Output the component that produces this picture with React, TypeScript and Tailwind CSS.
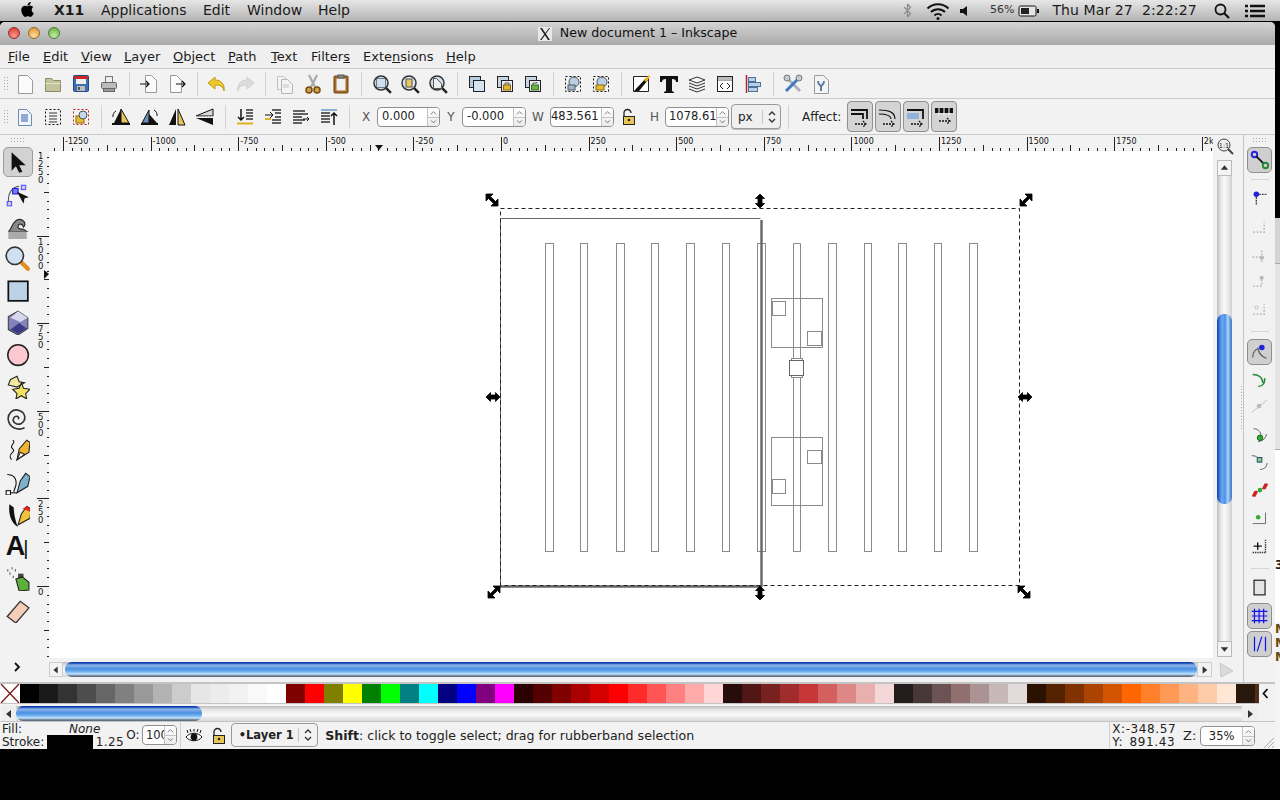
import type { ReactNode } from "react";
import { FaApple } from "react-icons/fa";
import { LuBluetooth } from "react-icons/lu";

const font = "font-['DejaVu_Sans',sans-serif]";

const aquaH = "bg-[linear-gradient(#0a3fb0_0px,#0a3fb0_1px,#8fb5e8_3px,#4a8fe2_7px,#7ab8f2_10px,#c6e8ff_12px,#5f6f86_14px)]";
const aquaV = "bg-[linear-gradient(90deg,#0b3fae_0px,#2e6fd8_2px,#6fa8ee_5px,#4f90e6_8px,#a8d8ff_11px,#4f7fc4_14px)]";
const trackH = "bg-[linear-gradient(#bdbdbd,#e8e8e8_4px,#fafafa_9px,#d8d8d8)]";
const trackV = "bg-[linear-gradient(90deg,#bdbdbd,#e8e8e8_4px,#fafafa_8px,#e4e4e4_12px,#cfcfcf)]";

const palette = [
  "#000000", "#1a1a1a", "#333333", "#4d4d4d", "#666666", "#808080", "#999999", "#b3b3b3", "#cccccc", "#e6e6e6", "#ececec", "#f2f2f2", "#f9f9f9", "#ffffff",
  "#800000", "#ff0000", "#808000", "#ffff00", "#008000", "#00ff00", "#008080", "#00ffff", "#000080", "#0000ff", "#800080", "#ff00ff",
  "#2b0000", "#550000", "#800000", "#aa0000", "#d40000", "#ff0000", "#ff2a2a", "#ff5555", "#ff8080", "#ffaaaa", "#ffd5d5",
  "#280b0b", "#501616", "#782121", "#a02c2c", "#c83737", "#d35f5f", "#de8787", "#e9afaf", "#f4d7d7",
  "#241c1c", "#483737", "#6c5353", "#916f6f", "#ac9393", "#c8b7b7", "#e3dbdb",
  "#2b1100", "#552200", "#803300", "#aa4400", "#d45500", "#ff6600", "#ff7f2a", "#ff9955", "#ffb380", "#ffccaa", "#ffe6d5",
  "#28170b", "#502d16",
];

function Ic({ children, s = 24 }: { children: ReactNode; s?: number }) {
  return (
    <svg width={s} height={s} viewBox="0 0 24 24" className="shrink-0">
      {children}
    </svg>
  );
}

const Page = ({ x = 5, y = 3, w = 14, h = 18, f = "#fbfbfb", st = "#9a9a9a" }) => (
  <path d={`M${x + 0.5} ${y + 0.5}h${w - 5}l5 5v${h - 5}h-${w}z`} fill={f} stroke={st} />
);

const Mag = ({ cx = 12, cy = 11, r = 7, f = "#cfdff0" }) => (
  <g>
    <path d={`M${cx + r * 0.7} ${cy + r * 0.7}l5 5`} stroke="#222" strokeWidth="2.5" />
    <circle cx={cx} cy={cy} r={r} fill={f} stroke="#333" strokeWidth="1.5" />
  </g>
);

const Dots = ({ c = "#111" }) => <rect x="4.5" y="4.5" width="15" height="15" fill="none" stroke={c} strokeDasharray="2 2" />;

const tb1: (ReactNode | null)[] = [
  <Ic><Page /></Ic>,
  <Ic><path d="M4.5 6.5h6l2 2h7v11h-15z" fill="#c3c39c" stroke="#8c8c6c" /><path d="M4.5 11.5h15" stroke="#e5e5cf" /></Ic>,
  <Ic><rect x="4.5" y="3.5" width="15" height="16" rx="1" fill="#3d6fb0" stroke="#1f4a86" /><rect x="5" y="4" width="14" height="3" fill="#cc2727" /><rect x="7" y="7" width="10" height="5" fill="#eee" /><rect x="8" y="14" width="8" height="5" fill="#bbb" /><rect x="9" y="15" width="2" height="3" fill="#555" /></Ic>,
  <Ic><rect x="8.5" y="4.5" width="7" height="6" fill="#eee" stroke="#777" /><rect x="4.5" y="10.5" width="15" height="6" rx="1" fill="#bcbcbc" stroke="#666" /><rect x="6.5" y="16.5" width="11" height="3" fill="#999" stroke="#666" /></Ic>,
  null,
  <Ic><Page x={8} y={3} w={11} h={17} /><path d="M3 12h9m-3-3l3 3-3 3" fill="none" stroke="#111" strokeWidth="1.2" /></Ic>,
  <Ic><Page x={5} y={3} w={11} h={17} /><path d="M11 12h9m-3-3l3 3-3 3" fill="none" stroke="#111" strokeWidth="1.2" /></Ic>,
  null,
  <Ic><path d="M10 5L3 11l7 6v-4c5 0 8 1 9 6 1-7-3-11-9-11z" fill="#edc92f" stroke="#c09a10" /></Ic>,
  <Ic><path d="M14 5l7 6-7 6v-4c-5 0-8 1-9 6-1-7 3-11 9-11z" fill="#dcdcdc" stroke="#cfcfcf" /></Ic>,
  null,
  <Ic><Page x={4} y={4} w={11} h={13} f="#f4f4f4" st="#c2c2c2" /><Page x={8} y={7} w={11} h={14} f="#f4f4f4" st="#b5b5b5" /><path d="M10 13h6m-6 2h6" stroke="#c5c5c5" /></Ic>,
  <Ic><path d="M8 3l6 12M16 3l-6 12" stroke="#aaa" strokeWidth="2.2" /><circle cx="8" cy="18" r="3" fill="#c9a24a" stroke="#7a4a12" strokeWidth="1.5" /><circle cx="16" cy="18" r="3" fill="#c9a24a" stroke="#7a4a12" strokeWidth="1.5" /></Ic>,
  <Ic><rect x="5" y="4" width="14" height="17" rx="1" fill="#a66a28" stroke="#6d4212" /><rect x="7.5" y="6.5" width="9" height="12" fill="#f1f1f1" /><rect x="9" y="3" width="6" height="3" fill="#888" stroke="#555" /></Ic>,
  null,
  <Ic><Mag /><rect x="7.5" y="6.5" width="9" height="9" fill="none" stroke="#111" strokeDasharray="1 1" /></Ic>,
  <Ic><Mag f="#d8e4ef" /><rect x="9" y="7" width="6" height="8" fill="#e9c85e" stroke="#555" /></Ic>,
  <Ic><Mag /><Page x={8} y={6} w={8} h={10} f="#eee" st="#555" /></Ic>,
  null,
  <Ic><rect x="4.5" y="4.5" width="11" height="11" fill="#b7cde4" stroke="#222" /><rect x="8.5" y="8.5" width="11" height="11" fill="#d5e3f0" stroke="#222" /></Ic>,
  <Ic><rect x="4.5" y="4.5" width="11" height="11" fill="#c8d6e4" stroke="#222" /><rect x="8.5" y="8.5" width="11" height="11" fill="#e9eef3" stroke="#222" /><rect x="10.5" y="13" width="7" height="5" fill="#e6b62e" stroke="#8a6a10" /><path d="M12 13v-2h4v2" fill="none" stroke="#555" /></Ic>,
  <Ic><rect x="4.5" y="4.5" width="11" height="11" fill="#c8d6e4" stroke="#222" /><rect x="8.5" y="8.5" width="11" height="11" fill="#e9eef3" stroke="#222" /><rect x="10.5" y="13" width="7" height="5" fill="#6cb04a" stroke="#3a701f" /><path d="M12 13v-2h4v-1" fill="none" stroke="#555" /></Ic>,
  null,
  <Ic><Dots /><circle cx="13" cy="10" r="5" fill="#b9cfe6" stroke="#555" /><rect x="7" y="13" width="7" height="5" fill="#9fb6cf" stroke="#555" /></Ic>,
  <Ic><Dots /><circle cx="13" cy="10" r="5" fill="#b9cfe6" stroke="#555" /><rect x="7" y="13" width="8" height="5" fill="#e9bb30" stroke="#8a6a10" /></Ic>,
  null,
  <Ic><path d="M4.5 4.5h15v15h-15z" fill="#fff" stroke="#222" /><path d="M5 19L5 5h10z" fill="#fff" /><path d="M5 19l12-13 2 2-9 11z" fill="#111" /><path d="M15 8l5-5 1 2-4 5z" fill="#f3b81f" /></Ic>,
  <Ic><path d="M3 4h18v6h-2c0-2-1-3-4-3v12l2 1v1H7v-1l2-1V7C6 7 5 8 5 10H3z" fill="#111" /></Ic>,
  <Ic><path d="M4 8l8-3 8 3-8 3z" fill="#f5f5f5" stroke="#333" /><path d="M4 11l8 3 8-3M4 14l8 3 8-3M4 17l8 3 8-3" fill="none" stroke="#333" /></Ic>,
  <Ic><rect x="4.5" y="4.5" width="15" height="15" fill="#fff" stroke="#222" /><path d="M5 8h14" stroke="#555" /><path d="M5 5h14v3H5z" fill="#bbb" /><path d="M10 11l-3 3 3 3m4-6l3 3-3 3" fill="none" stroke="#222" /></Ic>,
  <Ic><path d="M5.5 3v18" stroke="#b4232c" strokeWidth="1.5" /><rect x="7.5" y="5.5" width="7" height="4" fill="#b9d0ea" stroke="#4d6f99" /><rect x="7.5" y="10.5" width="12" height="4" fill="#b9d0ea" stroke="#4d6f99" /><rect x="7.5" y="15.5" width="9" height="4" fill="#b9d0ea" stroke="#4d6f99" /></Ic>,
  null,
  <Ic><path d="M5 5l14 14" stroke="#aab3bb" strokeWidth="3" /><path d="M19 5L5 19" stroke="#3f78c4" strokeWidth="3" /><circle cx="18" cy="6" r="3" fill="#c5cbd0" stroke="#777" /><circle cx="6" cy="6" r="3" fill="#c5cbd0" stroke="#777" /></Ic>,
  <Ic><Page x={5} y={3} w={14} h={18} f="#f4f4f4" st="#999" /><path d="M9 9c0 4 2 4 3 5v5m3-10c0 4-2 4-3 5" fill="none" stroke="#5c7e9c" strokeWidth="2" /></Ic>,
];

const tb2: (ReactNode | null)[] = [
  <Ic><Page x={5} y={4} w={13} h={16} f="#f2f6fb" st="#6a8cb8" /><path d="M8 10h7m-7 2h7m-7 2h7m-7 2h7" stroke="#2f5ea8" /></Ic>,
  <Ic><Dots /><path d="M8 8h8M8 11h8M8 14h8M8 17h8" stroke="#777" strokeWidth="1.5" /></Ic>,
  <Ic><Dots c="#c81e1e" /><rect x="7" y="11" width="8" height="7" fill="#e9bb30" stroke="#8a6a10" /><circle cx="14" cy="10" r="4" fill="#c5d8ec" stroke="#555" /></Ic>,
  null,
  <Ic><path d="M12 4v14H20z" fill="#e9c65c" stroke="#111" /><path d="M12 4L5 18h7z" fill="#111" /><path d="M3 19h18" stroke="#111" strokeWidth="2" /><path d="M7 6a6 6 0 0 0-3 6" fill="none" stroke="#111" /></Ic>,
  <Ic><path d="M5 18l7-13v13z" fill="#6b8fb8" stroke="#111" /><path d="M12 18h8l-8-9z" fill="#111" /><path d="M4 19h17" stroke="#111" strokeWidth="2" /><path d="M17 5a6 6 0 0 1 3 6" fill="none" stroke="#111" /></Ic>,
  <Ic><path d="M11 4v16H4z" fill="#111" /><path d="M13 4v16h7z" fill="#e9c65c" stroke="#111" /></Ic>,
  <Ic><path d="M3 11L20 4v7z" fill="#d8d8d8" stroke="#111" /><path d="M3 13l17 7v-7z" fill="#111" /><path d="M3 12h18" stroke="#fff" strokeDasharray="2 1" /></Ic>,
  null,
  <Ic><path d="M8 4v11m-3-3l3 3 3-3" fill="none" stroke="#111" strokeWidth="1.5" /><path d="M13 5h7m-7 3h7m-7 3h7m-7 3h7" stroke="#333" strokeWidth="1.4" /><path d="M4 18.5h16" stroke="#e0b020" strokeWidth="2" /></Ic>,
  <Ic><path d="M4 10h8m-3-3l3 3-3 3" fill="none" stroke="#111" /><path d="M11 5h9m-6 3h6m-6 4h6m-9 3h9m-9 3h9" stroke="#333" strokeWidth="1.4" /><path d="M4 14h6" stroke="#e0b020" strokeWidth="2" /></Ic>,
  <Ic><path d="M4 6h12M4 9h15M4 12h9M4 15h12M4 18h9" stroke="#333" strokeWidth="1.4" /><path d="M14 14h6m-2-2l2 2-2 2" fill="none" stroke="#111" /></Ic>,
  <Ic><path d="M4 5h16" stroke="#8fb0d4" strokeWidth="2" /><path d="M4 8h9M4 11h9M4 14h9M4 17h9" stroke="#333" strokeWidth="1.4" /><path d="M17 20V8m-3 3l3-3 3 3" fill="none" stroke="#111" strokeWidth="1.5" /></Ic>,
];

const affect = [
  <Ic><path d="M3 5h16v9M3 9h12v5" fill="none" stroke="#111" strokeWidth="1.8" /><path d="M7 19h11m-3-3l3 3-3 3" fill="none" stroke="#111" strokeWidth="1.3" strokeDasharray="2 1" /></Ic>,
  <Ic><path d="M3 5c9 0 16 2 16 9M3 9c6 0 12 1 12 5" fill="none" stroke="#111" strokeWidth="1.2" /><path d="M7 19h11m-3-3l3 3-3 3" fill="none" stroke="#111" strokeWidth="1.3" strokeDasharray="2 1" /></Ic>,
  <Ic><path d="M3 5h16v9" fill="none" stroke="#111" strokeWidth="1.8" /><rect x="3" y="8" width="12" height="6" fill="#8fb4dc" /><path d="M7 19h11m-3-3l3 3-3 3" fill="none" stroke="#111" strokeWidth="1.3" strokeDasharray="2 1" /></Ic>,
  <Ic><path d="M3 3h18v5H3z" fill="#111" /><path d="M7 3v7m5-7v7m5-7v7" stroke="#fff" /><path d="M7 16h11m-3-3l3 3-3 3" fill="none" stroke="#111" strokeWidth="1.3" strokeDasharray="2 1" /></Ic>,
];

const tools: [ReactNode, string][] = [
  [<Ic s={26}><path d="M7 3v17l4-4 3 6 3-1-3-6h6z" fill="#111" /></Ic>, "h-[30px] mb-[2px]"],
  [<Ic s={26}><path d="M4 18C4 10 7 5 14 4" fill="none" stroke="#555" /><rect x="8" y="6" width="5" height="5" fill="#7a7cf8" stroke="#1b1bd8" /><rect x="3" y="18" width="4" height="4" fill="#ccd" stroke="#55f" /><rect x="16" y="3" width="4" height="4" fill="#ccd" stroke="#55f" /><path d="M12 9l11 5-4 1-1 5z" fill="#111" /></Ic>, "h-[31px]"],
  [<Ic s={26}><path d="M4 17c3-1 3-9 9-11 5-1 8 4 5 7-1-3-4-4-5-1-1 2 2 3 5 3l3 2z" fill="#888" stroke="#222" /><path d="M4 17h17v7H4z" fill="#aaa" /></Ic>, "h-[31px]"],
  [<Ic s={26}><path d="M15 15l7 7" stroke="#e09020" strokeWidth="4" strokeLinecap="round" /><circle cx="10" cy="10" r="8" fill="#cfe0f0" stroke="#333" strokeWidth="1.5" /></Ic>, "h-[33px]"],
  [<Ic s={26}><rect x="4" y="4" width="18" height="18" fill="#bcd2e6" stroke="#111" strokeWidth="1.6" /></Ic>, "h-[32px]"],
  [<Ic s={26}><path d="M13 2l9 6v10l-9 6-9-5V7z" fill="#8582bb" stroke="#444" /><path d="M13 2l9 6-7 4-9-4z" fill="#d8d8ec" /><path d="M6 19l8-6 7 5-8 5z" fill="#3a3a88" /></Ic>, "h-[32px]"],
  [<Ic s={26}><circle cx="13" cy="13" r="9.5" fill="#fdc8d2" stroke="#222" strokeWidth="1.4" /></Ic>, "h-[32px]"],
  [<Ic s={26}><path d="M6 6l6-3 2 5 5 1-7 4-8-2z" fill="#f2eaa0" stroke="#222" /><path d="M16 9l2 5 6 1-4 4 1 5-5-3-5 3 1-5-4-4 6-1z" fill="#f3e165" stroke="#222" /></Ic>, "h-[32px]"],
  [<Ic s={26}><path d="M13 13c2-2-2-4-4-1-2 4 3 7 7 5 5-3 4-10-2-12C8 3 3 8 4 14c1 7 9 10 15 7" fill="none" stroke="#333" strokeWidth="1.5" /></Ic>, "h-[31px]"],
  [<Ic s={26}><path d="M8 3c4 2-4 5 0 8s-6 4-1 10" fill="none" stroke="#111" /><path d="M12 21l2-10 7-8 3 2-1 9z" fill="#efb530" stroke="#222" /><path d="M12 21l3-7 4 2z" fill="#fff" stroke="#222" /></Ic>, "h-[33px]"],
  [<Ic s={26}><path d="M3 5c6 0 9 4 8 10l-2 6" fill="none" stroke="#111" /><rect x="2" y="20" width="4" height="4" fill="#fff" stroke="#111" /><path d="M6 22h6" stroke="#111" /><path d="M12 22l3-11 5-7 4 3-2 9z" fill="#7fb1cd" stroke="#222" /></Ic>, "h-[32px]"],
  [<Ic s={26}><path d="M5 3c-1 8 1 17 8 21-2-4-4-12-4-18z" fill="#111" /><path d="M13 22l3-10 5-7 4 2-1 9z" fill="#f1c23c" stroke="#222" /><path d="M17 7l4-2 4 2-1 3z" fill="#d22" /></Ic>, "h-[32px]"],
  [<span className="text-[27px] font-bold leading-none text-[#111] font-['Liberation_Sans',sans-serif]">A<span className="font-normal text-[20px] -ml-[2px]">|</span></span>, "h-[32px]"],
  [<Ic s={26}><path d="M3 5h1m3-2h1M5 8h1m4-3h1M8 11h1" stroke="#555" strokeWidth="2" /><rect x="13" y="8" width="5" height="4" fill="#444" /><path d="M11 13l6-2 6 5v7l-9 1z" fill="#5cb03a" stroke="#222" /></Ic>, "h-[32px]"],
  [<Ic s={26}><path d="M3 18L15 4l8 6-12 14z" fill="#f6cdb8" stroke="#333" strokeWidth="1.2" /></Ic>, "h-[32px]"],
];

const Snap = ({ d, d2, c = "#bbb" }: { d: string; d2?: ReactNode; c?: string }) => (
  <Ic s={20}>
    <path d={d} fill="none" stroke={c} strokeWidth="2" strokeDasharray="2 2" />
    {d2}
  </Ic>
);

const rule = <div className="w-[18px] h-px bg-[#d5d5d5]" />;

const snaps: [ReactNode, string, boolean?][] = [
  [<Ic s={22}><circle cx="6" cy="6" r="3" fill="none" stroke="#22d" strokeWidth="2" /><path d="M8 8l8 8" stroke="#111" strokeWidth="2" /><circle cx="18" cy="18" r="3" fill="none" stroke="#283" strokeWidth="2" /></Ic>, "h-[26px] mb-[6px]", true],
  [rule, "h-px mb-[6px]"],
  [<Ic s={22}><path d="M8 8h11M8 8v11" stroke="#444" strokeWidth="1.5" strokeDasharray="2 1" /><circle cx="8" cy="8" r="3" fill="#22d" /></Ic>, "h-[24px] mb-[6px]"],
  [<Snap d="M4 17h13V5" />, "h-[24px] mb-[6px]"],
  [<Snap d="M3 11h14M14 3v14" d2={<circle cx="14" cy="12" r="2.5" fill="#bbb" />} />, "h-[24px]"],
  [<Snap d="M4 17h10V5" d2={<circle cx="14" cy="7" r="2.5" fill="#bbb" />} />, "h-[24px] mb-[4px]"],
  [<Snap d="M4 17h13V5" d2={<circle cx="8" cy="9" r="2" fill="none" stroke="#bbb" />} />, "h-[24px] mb-[9px]"],
  [rule, "h-px mb-[7px]"],
  [<Ic s={22}><path d="M4 18c0-6 4-10 10-11M10 9c1 5 4 8 9 10" fill="none" stroke="#666" strokeWidth="1.5" /><circle cx="14" cy="7" r="3" fill="#22d" /></Ic>, "h-[26px]", true],
  [<Ic s={22}><path d="M4 6c6 0 11 3 11 9M17 10c1 6-3 9-7 9" fill="none" stroke="#283" strokeWidth="1.5" /></Ic>, "h-[30px]"],
  [<Ic s={22}><path d="M3 18L20 4" stroke="#bbb" /><circle cx="11" cy="11" r="2.5" fill="#bbb" /></Ic>, "h-[24px]"],
  [<Ic s={22}><path d="M5 4c6 0 9 5 8 11M19 10c-1 6-6 8-9 8" fill="none" stroke="#555" /><circle cx="12" cy="14" r="3" fill="#3a3" stroke="#161" /></Ic>, "h-[34px]"],
  [<Ic s={22}><path d="M3 4c6 0 8 3 9 8M20 12c-1 5-4 7-8 7" fill="none" stroke="#555" /><rect x="9" y="6" width="5" height="5" fill="#8c8" stroke="#146" /></Ic>, "h-[20px]"],
  [<Ic s={22}><path d="M4 18l3-6-1 6 3-6M15 10l3-6-1 6 3-6" fill="none" stroke="#c22" strokeWidth="2" /><circle cx="12" cy="11" r="2.5" fill="#3a3" /></Ic>, "h-[36px]"],
  [<Ic s={22}><path d="M4 17h14V5" fill="none" stroke="#666" strokeWidth="1" /><circle cx="10" cy="10" r="2.5" fill="#3a3" /></Ic>, "h-[20px]"],
  [<Ic s={22}><path d="M4 18h14M18 4v14" fill="none" stroke="#333" strokeDasharray="1.5 1" strokeWidth="1.5" /><path d="M5 11h9M9.5 7v8" stroke="#111" strokeWidth="1.5" /></Ic>, "h-[36px] mb-[3px]"],
  [rule, "h-px mb-[6px]"],
  [<Ic s={22}><rect x="5.5" y="3.5" width="12" height="16" fill="#e4e4e4" stroke="#111" strokeWidth="1.2" /></Ic>, "h-[26px] mb-[2px]"],
  [<Ic s={22}><path d="M6 4v16M11 4v16M16 4v16M3 7h17M3 12h17M3 17h17" stroke="#11e" strokeWidth="1.3" /></Ic>, "h-[26px] mb-[2px]", true],
  [<Ic s={22}><path d="M6 4v16M18 4v16" stroke="#11e" strokeWidth="1.3" /><path d="M9 20l5-16" stroke="#11e" strokeWidth="1.3" /></Ic>, "h-[26px]", true],
];

function Grip({ className }: { className: string }) {
  return <div className={`bg-[radial-gradient(#a8a8a8_0.7px,transparent_0.8px)] bg-[length:3px_3px] ${className}`} />;
}

function Sep({ w = "w-[12px]" }: { w?: string }) {
  return (
    <div className={`${w} h-[24px] flex justify-center`}>
      <div className="w-px h-full bg-[#d2d2d2]" />
    </div>
  );
}

function Row({ items, seps = "w-[12px]" }: { items: (ReactNode | null)[]; seps?: string }) {
  return (
    <>
      {items.map((it, i) =>
        it === null ? (
          <Sep key={i} w={seps} />
        ) : (
          <div key={i} className="w-[28px] flex justify-center items-center">
            {it}
          </div>
        ),
      )}
    </>
  );
}

function SpinBtns() {
  return (
    <div className="w-[12px] h-full border-l border-[#c4c4c4] flex flex-col shrink-0 bg-[linear-gradient(#ffffff,#ebebeb)]">
      <svg viewBox="0 0 12 10" className="h-1/2 w-full">
        <path d="M3 7l3-3 3 3" fill="none" stroke="#777" />
      </svg>
      <svg viewBox="0 0 12 10" className="h-1/2 w-full border-t border-[#c4c4c4]">
        <path d="M3 3l3 3 3-3" fill="none" stroke="#555" />
      </svg>
    </div>
  );
}

function Spin({ v, w, indent = "pl-[4px]", center }: { v: string; w: string; indent?: string; center?: boolean }) {
  return (
    <div className={`${w} h-[20px] bg-white border border-[#8f8f8f] rounded-[4px] flex items-center overflow-hidden shrink-0`}>
      <div className={`flex-1 min-w-0 overflow-hidden whitespace-nowrap text-[11.5px] text-[#222] ${indent} ${center ? "text-center" : ""}`}>{v}</div>
      <SpinBtns />
    </div>
  );
}

function Updown() {
  return (
    <svg width="10" height="14" viewBox="0 0 10 14">
      <path d="M2 5l3-3 3 3M2 9l3 3 3-3" fill="none" stroke="#333" strokeWidth="1.4" />
    </svg>
  );
}

function Lock() {
  return (
    <svg width="14" height="18" viewBox="0 0 14 18">
      <path d="M2 9V5a3.5 3.5 0 0 1 7 0" fill="none" stroke="#222" strokeWidth="1.3" />
      <rect x="1.5" y="8.5" width="11" height="8" fill="#e8c75a" stroke="#222" />
      <circle cx="7" cy="12" r="1.3" fill="#222" />
    </svg>
  );
}

const AppleMenu = [
  ["X11", "w-[47px] font-bold"],
  ["Applications", "w-[102px]"],
  ["Edit", "w-[44px]"],
  ["Window", "w-[71px]"],
  ["Help", "w-[40px]"],
];

const menus: [string, string, string, string][] = [
  ["", "F", "ile", "w-[35px]"],
  ["", "E", "dit", "w-[38px]"],
  ["", "V", "iew", "w-[43px]"],
  ["", "L", "ayer", "w-[49px]"],
  ["", "O", "bject", "w-[55px]"],
  ["", "P", "ath", "w-[43px]"],
  ["", "T", "ext", "w-[40px]"],
  ["Filter", "s", "", "w-[52px]"],
  ["Exte", "n", "sions", "w-[83px]"],
  ["", "H", "elp", "w-[40px]"],
];

function TopBar() {
  return (
    <div className="h-[22px] shrink-0 border-b border-black bg-[linear-gradient(#e6e6e6,#b4b4b4)] flex items-center text-[14px] text-[#1a1a1a] font-['DejaVu_Sans',sans-serif]">
      <div className="w-[54px] pl-[19px]">
        <FaApple className="text-[17px] text-black -mt-[2px]" />
      </div>
      {AppleMenu.map(([t, c]) => (
        <span key={t} className={c}>
          {t}
        </span>
      ))}
      <LuBluetooth className="ml-[542px] text-[15px] text-[#8a8a8a]" />
      <svg width="24" height="18" viewBox="0 0 24 18" className="ml-[11px]">
        <path d="M1.5 6.5a15 15 0 0 1 21 0M5 10a10 10 0 0 1 14 0M8.5 13.5a5 5 0 0 1 7 0" fill="none" stroke="#111" strokeWidth="2" />
        <circle cx="12" cy="16.5" r="1.5" fill="#111" />
      </svg>
      <svg width="12" height="12" viewBox="0 0 12 12" className="ml-[9px]">
        <path d="M1 4h3l4-3v10L4 8H1z" fill="#111" />
      </svg>
      <span className="ml-[19px] text-[11px] text-[#333]">56%</span>
      <svg width="22" height="12" viewBox="0 0 22 12" className="ml-[4px]">
        <rect x="1" y="1" width="17" height="10" rx="1.5" fill="#e5e5e5" stroke="#111" />
        <rect x="3" y="3" width="8" height="6" fill="#222" />
        <rect x="19" y="4" width="2" height="4" fill="#111" />
      </svg>
      <span className="ml-[12px] whitespace-pre tracking-[0.1px]">Thu Mar 27  2:22:27</span>
      <svg width="16" height="16" viewBox="0 0 16 16" className="ml-[17px]">
        <circle cx="6.5" cy="6.5" r="5" fill="none" stroke="#111" strokeWidth="1.8" />
        <path d="M10 10l5 5" stroke="#111" strokeWidth="2.2" />
      </svg>
      <svg width="20" height="14" viewBox="0 0 20 14" className="ml-[15px]">
        <path d="M5 2h15M5 7h15M5 12h15" stroke="#111" strokeWidth="2.4" />
        <path d="M0 2h3M0 7h3M0 12h3" stroke="#111" strokeWidth="2.4" />
      </svg>
    </div>
  );
}

function HRuler() {
  const ticks = [];
  for (let i = -52; i <= 81; i++) {
    const x = Math.round(501 + i * 8.76 - 49) + 0.5;
    if (x < 0 || x > 1164) continue;
    const y1 = i % 10 === 0 ? 2 : i % 5 === 0 ? 10 : 13;
    ticks.push(<path key={i} d={`M${x} ${y1}V16`} stroke="#222" />);
  }
  const labels = ["-1250", "-1000", "-750", "-500", "-250", "0", "250", "500", "750", "1000", "1250", "1500", "1750", "2k"];
  return (
    <svg width="1164" height="16" className="block">
      {ticks}
      {labels.map((l, i) => (
        <text key={l} x={501 + (i - 5) * 87.6 - 49 + 2} y="9" fontSize="8" fill="#111" fontFamily="DejaVu Sans">
          {l}
        </text>
      ))}
      <path d="M326 10h8l-4 5z" fill="#111" />
    </svg>
  );
}

function VRuler() {
  const ticks = [];
  for (let i = -10; i <= 52; i++) {
    const y = Math.round(586 - i * 8.76 - 151) + 0.5;
    if (y < 0 || y > 507) continue;
    const x1 = i % 10 === 0 ? 2 : i % 5 === 0 ? 9 : 12;
    ticks.push(<path key={i} d={`M${x1} ${y}H14`} stroke="#222" />);
  }
  return (
    <svg width="14" height="507" className="block">
      {ticks}
      {["0", "250", "500", "750", "1000", "1250"].map((l, k) =>
        l.split("").map((c, j) => (
          <text key={`${l}${j}`} x="3" y={586 - k * 87.6 - 151 + (k === 5 ? 11 : 9) + j * 8} fontSize="8.5" fill="#111" fontFamily="DejaVu Sans">
            {c}
          </text>
        )),
      )}
      <path d="M9 119l5 4-5 5z" fill="#111" />
    </svg>
  );
}

const stripX = [545, 580, 616, 651, 686, 722, 757, 793, 828, 864, 898, 934, 969];

const handleDiag = "M-7 -7h7l-2.5 2.5 5 5 2.5-2.5v7h-7l2.5-2.5-5-5-2.5 2.5z";
const handleV = "M0 -7l4.5 4.5h-2.5v5h2.5l-4.5 4.5-4.5-4.5h2.5v-5h-2.5z";

function Drawing() {
  return (
    <svg width="1164" height="507" viewBox="49 151 1164 507" className="block bg-white">
      <g fill="none" stroke="#8a8a8a">
        {stripX.map((x, i) =>
          x === 793 ? (
            <path key={x} d="M793.5 243.5h7M793.5 243.5V358.5M800.5 243.5V358.5M793.5 377.5V551.5h7V377.5" />
          ) : (
            <rect key={x} x={x + 0.5} y="243.5" width={i % 2 ? 7 : 8} height="308" />
          ),
        )}
        <rect x="771.5" y="298.5" width="51" height="49" />
        <rect x="772.5" y="301.5" width="13" height="14" />
        <rect x="807.5" y="331.5" width="14" height="14" />
        <rect x="771.5" y="437.5" width="51" height="68" />
        <rect x="807.5" y="450.5" width="14" height="13" />
        <rect x="772.5" y="479.5" width="13" height="14" />
        <rect x="791.5" y="358.5" width="11" height="19" />
        <rect x="789.5" y="360.5" width="14" height="15" stroke="#666" fill="#fff" />
      </g>
      <path d="M500.5 585.5V218.5H760.5" fill="none" stroke="#666" />
      <path d="M761.5 220V587M500 586.5H762" fill="none" stroke="#666" strokeWidth="2.4" />
      <rect x="500.5" y="208.5" width="519" height="377" fill="none" stroke="#222" strokeDasharray="4 3" />
      <g fill="#000" stroke="#000" strokeWidth="0.8">
        <path d={handleDiag} transform="translate(493 201)" />
        <path d={handleDiag} transform="translate(1025 593)" />
        <path d={handleDiag} transform="translate(1025 201) rotate(90)" />
        <path d={handleDiag} transform="translate(493 593) rotate(90)" />
        <path d={handleV} transform="translate(760 201)" />
        <path d={handleV} transform="translate(760 593)" />
        <path d={handleV} transform="translate(493 397) rotate(90)" />
        <path d={handleV} transform="translate(1025 397) rotate(90)" />
      </g>
    </svg>
  );
}

function Arrow({ dir }: { dir: "l" | "r" | "u" | "d" }) {
  const d = { l: "M9 3v8L4 7z", r: "M5 3v8l5-4z", u: "M3 9h8L7 4z", d: "M3 5h8l-4 5z" }[dir];
  return (
    <svg width="14" height="14" viewBox="0 0 14 14">
      <path d={d} fill="#333" />
    </svg>
  );
}

export default function App() {
  return (
    <div className={`w-[1280px] h-[800px] overflow-hidden bg-black flex flex-col ${font} text-[#222]`}>
      <TopBar />
      <div className="flex h-[727px] shrink-0">
        <div className="w-[1275px] shrink-0 flex flex-col rounded-t-[5px] overflow-hidden bg-[#f2f2f2]">
          {/* title bar */}
          <div className="h-[23px] shrink-0 flex items-center justify-center relative bg-[linear-gradient(#d4d4d4,#a9a9a9)] text-[12.6px] text-[#111]">
            <div className="absolute left-[8px] top-[5px] flex gap-[8px]">
              <div className="w-[12px] h-[12px] rounded-full border border-[#8a3030] bg-[radial-gradient(circle_at_50%_80%,#ff9a90,#d8302c)]" />
              <div className="w-[12px] h-[12px] rounded-full border border-[#94682a] bg-[radial-gradient(circle_at_50%_80%,#ffe09a,#dc8c2c)]" />
              <div className="w-[12px] h-[12px] rounded-full border border-[#4f7a38] bg-[radial-gradient(circle_at_50%_80%,#c6f0a0,#5ea83c)]" />
            </div>
            <svg width="14" height="14" viewBox="0 0 14 14" className="mr-[8px]">
              <rect width="14" height="14" fill="#e8e8e8" />
              <path d="M2 1l8 12h2L4 1zM11 1L2 13h1.5L12 1z" fill="#222" />
            </svg>
            New document 1 – Inkscape
          </div>

          {/* menu */}
          <div className="h-[24px] shrink-0 flex items-center pl-[8px] text-[13px] text-[#1c1c1c] border-b border-[#c9c9c9] bg-[#efefef]">
            {menus.map(([a, u, b, w]) => (
              <span key={a + u + b} className={w}>
                {a}
                <span className="underline">{u}</span>
                {b}
              </span>
            ))}
          </div>

          {/* commands bar */}
          <div className="h-[30px] shrink-0 flex items-center border-b border-[#c9c9c9]">
            <Grip className="w-[6px] h-[15px] ml-[3px] mr-[2px]" />
            <Row items={tb1} />
          </div>

          {/* select tool controls */}
          <div className="h-[36px] shrink-0 flex items-center border-b border-[#c9c9c9] text-[12px]">
            <Grip className="w-[6px] h-[15px] ml-[3px] mr-[2px]" />
            <Row items={tb2} />
            <Sep />
            <span className="w-[22px] text-center text-[#555]">X</span>
            <Spin v="0.000" w="w-[63px]" />
            <span className="w-[22px] text-center text-[#555]">Y</span>
            <Spin v="-0.000" w="w-[64px]" />
            <span className="w-[24px] text-center text-[#555]">W</span>
            <Spin v="483.561" w="w-[64px]" indent="pl-0" />
            <div className="w-[30px] flex justify-center">
              <Lock />
            </div>
            <span className="w-[21px] text-center text-[#555]">H</span>
            <Spin v="1078.613" w="w-[64px]" indent="pl-[3px]" />
            <div className="ml-[2px] w-[50px] h-[25px] border border-[#9a9a9a] rounded-[4px] flex items-center bg-[#f0f0f0] shadow-[0_1px_0_#bbb]">
              <span className="w-[30px] pl-[6px]">px</span>
              <div className="h-[14px] w-px bg-[#c8c8c8]" />
              <div className="ml-[4px]">
                <Updown />
              </div>
            </div>
            <Sep w="w-[14px]" />
            <span className="w-[52px] pl-[7px]">Affect:</span>
            <div className="flex gap-[2px]">
              {affect.map((a, i) => (
                <div key={i} className="w-[26px] h-[31px] flex items-center justify-center rounded-[4px] border border-[#8f8f8f] bg-[#d4d4d4]">
                  {a}
                </div>
              ))}
            </div>
          </div>

          {/* main row */}
          <div className="h-[547px] shrink-0 flex">
            <div className="w-[35px] shrink-0 flex flex-col items-center">
              <Grip className="w-[16px] h-[6px] mt-[2px] mb-[4px]" />
              {tools.map(([t, h], i) => (
                <div key={i} className={`w-[30px] ${h} pr-[1px] shrink-0 flex items-center justify-center ${i === 0 ? "rounded-[5px] border border-[#9c9c9c] bg-[#d2d2d2]" : ""}`}>
                  {t}
                </div>
              ))}
              <svg width="12" height="14" viewBox="0 0 12 14" className="mt-[34px] mr-[2px]">
                <path d="M4 3l4 4-4 4" fill="none" stroke="#111" strokeWidth="1.8" />
              </svg>
            </div>

            <div className="w-[1208px] shrink-0 grid grid-cols-[14px_1164px_30px] grid-rows-[16px_507px_24px]">
              <div />
              <HRuler />
              <div className="flex justify-start pl-[2px]">
                <svg width="22" height="22" viewBox="0 0 22 22" className="mt-[2px]">
                  <circle cx="9" cy="8" r="6" fill="#eee" stroke="#444" />
                  <path d="M13 12l5 5" stroke="#444" strokeWidth="2" />
                  <text x="9" y="10.5" fontSize="6.5" textAnchor="middle" fill="#222" fontFamily="DejaVu Sans">
                    1:1
                  </text>
                </svg>
              </div>

              <VRuler />
              <Drawing />
              <div className="pl-[4px] pt-[9px] relative">
                <div className={`w-[15px] h-[497px] flex flex-col ${trackV}`}>
                  <div className="h-[16px] shrink-0 bg-[#f3f3f3] border border-[#bbb] flex items-center justify-center">
                    <Arrow dir="u" />
                  </div>
                  <div className="h-[138px] shrink-0" />
                  <div className={`h-[190px] shrink-0 rounded-[7px] ${aquaV}`} />
                  <div className="flex-1" />
                  <div className="h-[16px] shrink-0 bg-[#f3f3f3] border border-[#bbb] flex items-center justify-center">
                    <Arrow dir="d" />
                  </div>
                </div>
                <Grip className="absolute left-[27px] top-[234px] w-[3px] h-[46px]" />
              </div>

              <div />
              <div className="pt-[4px]">
                <div className={`h-[15px] w-[1163px] flex ${trackH}`}>
                  <div className="w-[14px] bg-[#f3f3f3] border border-[#ccc] flex items-center justify-center">
                    <Arrow dir="l" />
                  </div>
                  <div className={`ml-[2px] flex-1 rounded-[7px] ${aquaH}`} />
                  <div className="w-[15px] bg-[#f3f3f3] border border-[#ccc] flex items-center justify-center">
                    <Arrow dir="r" />
                  </div>
                </div>
              </div>
              <div className="pl-[5px] pt-[4px]">
                <svg width="16" height="16" viewBox="0 0 16 16">
                  <path d="M2 1l13 8-12 6z" fill="#d8dcda" stroke="#c8c8c8" />
                </svg>
              </div>
            </div>

            <div className="w-[32px] shrink-0 border-l border-[#c4c4c4] flex flex-col items-center">
              <Grip className="w-[16px] h-[6px] mt-[2px] mb-[4px]" />
              {snaps.map(([s, h, on], i) => (
                <div key={i} className={`w-[25px] ${h} shrink-0 flex items-center justify-center ${on ? "rounded-[5px] border border-[#8f8f8f] bg-[#cfcfcf]" : ""}`}>
                  {s}
                </div>
              ))}
            </div>
          </div>

          {/* palette */}
          <div className="h-[22px] shrink-0 flex border-t-2 border-[#c4c4c4]">
            <div className="w-[1259px] h-[19px] flex overflow-hidden border-b border-[#c4c4c4] box-content">
              <svg width="20" height="19" viewBox="0 0 20 19" className="shrink-0 bg-white">
                <path d="M1 0l18 19M19 0L1 19" stroke="#7a1616" strokeWidth="1.3" />
              </svg>
              {palette.map((c, i) => (
                <div key={i} className="w-[19px] shrink-0" style={{ backgroundColor: c }} />
              ))}
            </div>
            <svg width="16" height="19" viewBox="0 0 16 19" className="shrink-0">
              <path d="M8.5 5l-4 4.5 4 4.5" fill="none" stroke="#111" strokeWidth="1.8" />
            </svg>
          </div>

          <div className="h-[17px] shrink-0 pt-[2px] pl-[2px]">
            <div className={`w-[1256px] h-[15px] flex ${trackH}`}>
              <div className="w-[14px] bg-[#eee] flex items-center justify-center">
                <Arrow dir="l" />
              </div>
              <div className={`w-[186px] rounded-[7px] ${aquaH}`} />
              <div className="flex-1" />
              <div className="w-[16px] bg-[#eee] flex items-center justify-center">
                <Arrow dir="r" />
              </div>
            </div>
          </div>

          {/* status bar */}
          <div className="h-[28px] shrink-0 flex border-t border-[#c4c4c4] text-[12px] leading-[14px]">
            <div className="w-[124px] shrink-0 pl-[2px]">
              <div className="flex h-[13px]">
                <span className="w-[67px]">Fill:</span>
                <span className="italic">None</span>
              </div>
              <div className="flex h-[14px]">
                <span className="w-[45px]">Stroke:</span>
                <div className="w-[46px] h-[14px] bg-black" />
                <span className="ml-[3px] tracking-[0.4px]">1.25</span>
              </div>
            </div>
            <span className="w-[18px] self-center text-center mt-[-2px]">O:</span>
            <div className="self-center -mt-[2px]">
              <Spin v="100" w="w-[35px]" indent="pl-[3px]" />
            </div>
            <div className="w-px h-[26px] bg-[#cfcfcf] ml-[3px]" />
            <div className="w-[26px] flex items-center justify-center">
              <svg width="18" height="14" viewBox="0 0 18 14">
                <path d="M1 8c4-5 12-5 16 0-4 5-12 5-16 0z" fill="#fff" stroke="#111" />
                <circle cx="9" cy="8" r="3.4" fill="#111" />
                <path d="M3 4L2 1M6 3L5 0M9 2.5V0M12 3l1-3M15 4l1-3" stroke="#111" />
              </svg>
            </div>
            <div className="w-[24px] flex items-center justify-center">
              <Lock />
            </div>
            <div className="mt-[1px] w-[88px] h-[24px] border border-[#9a9a9a] rounded-[4px] flex items-center">
              <span className="w-[66px] pl-[7px] text-[11.5px] font-bold whitespace-nowrap">•Layer 1</span>
              <div className="h-[14px] w-px bg-[#c8c8c8]" />
              <div className="ml-[4px]">
                <Updown />
              </div>
            </div>
            <div className="ml-[7px] w-[784px] shrink-0 self-center text-[12.6px] whitespace-nowrap">
              <b>Shift</b>: click to toggle select; drag for rubberband selection
            </div>
            <div className="w-px h-[26px] bg-[#cfcfcf]" />
            <div className="w-[70px] pl-[2px] tracking-[0.6px] text-[#222] leading-[13px] pt-[1px]">
              <div className="flex justify-between pr-[5px]">
                <span>X:</span>
                <span>-348.57</span>
              </div>
              <div className="flex justify-between pr-[5px]">
                <span>Y:</span>
                <span>891.43</span>
              </div>
            </div>
            <span className="w-[19px] self-center text-center text-[13px]">Z:</span>
            <div className="self-center ml-[1px]">
              <Spin v="35%" w="w-[55px]" indent="pl-0" center />
            </div>
            <svg width="14" height="14" viewBox="0 0 14 14" className="self-end ml-[6px]">
              <path d="M13 3L3 13M13 7l-6 6M13 11l-2 2" stroke="#aaa" />
            </svg>
          </div>
        </div>

        {/* window peeking out behind */}
        <div className="w-[5px] shrink-0 overflow-hidden flex flex-col text-[12px] font-bold leading-[14px] text-[#1a1a1a]">
          <div className="h-[196px] shrink-0 bg-black" />
          <div className="h-[531px] shrink-0 bg-[#f4f4f4] flex flex-col">
            <div className="h-[46px] shrink-0 bg-[#d4d4d4] border-b border-[#aaa]" />
            <div className="h-[186px] shrink-0 bg-[#e4e4e4] border-b border-[#aaa]" />
            <div className="h-[126px] shrink-0 bg-white pt-[108px]">3.</div>
            <div className="h-[46px] shrink-0 bg-white" />
            <div className="text-[#6b4a10]">M</div>
            <div className="text-[#6b4a10]">M</div>
            <div className="text-[#6b4a10]">M</div>
          </div>
        </div>
      </div>
    </div>
  );
}
